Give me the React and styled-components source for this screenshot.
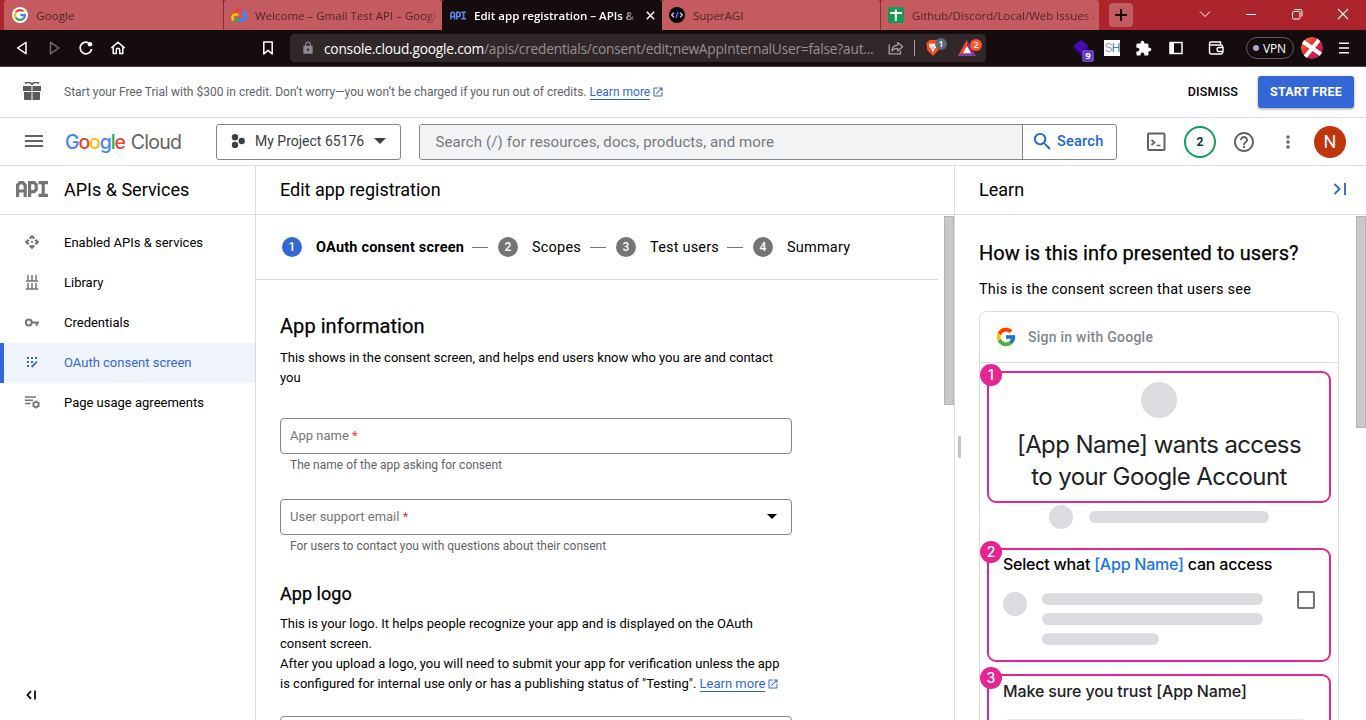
import React from 'react';
import styled, { createGlobalStyle, css } from 'styled-components';
import { FcGoogle } from 'react-icons/fc';
import {
  MdApi, MdHelpOutline, MdMoreVert, MdOpenInNew, MdSearch, MdExtension, MdLock,
} from 'react-icons/md';

const Global = createGlobalStyle`
  * { box-sizing: border-box; }
  html, body { margin: 0; padding: 0; overflow: hidden; background: #fff; }
  body { font-family: Roboto, "Liberation Sans", sans-serif; font-size: 13px; color: #000; }
  svg { display: block; flex: none; }
`;

const uiFont = '"Open Sans", "Noto Sans", sans-serif';
const brandFont = 'Inter, "Open Sans", sans-serif';
const line = '#dadce0';

const Page = styled.div`
  width: 1366px;
  height: 720px;
  display: flex;
  flex-direction: column;
  overflow: hidden;
`;

/* ---------- browser chrome ---------- */
const TabStrip = styled.div`
  height: 30px;
  flex: none;
  display: flex;
  background: #ad252c;
  padding-left: 4px;
  font-family: ${uiFont};
`;
const Tab = styled.div`
  width: ${(p) => p.$w}px;
  flex: none;
  display: flex;
  align-items: center;
  padding-left: ${(p) => p.$pad}px;
  gap: 8px;
  background: ${(p) => (p.$active ? '#150d0d' : '#c45b60')};
  color: ${(p) => (p.$active ? '#fff' : '#552428')};
  border-right: ${(p) => (p.$rule ? '1px solid #7d3238' : '0')};
  border-radius: 3px 3px 0 0;
  font-size: 11.5px;
  font-weight: ${(p) => (p.$active ? 600 : 400)};
`;
const TabTitle = styled.span`
  width: ${(p) => p.$w}px;
  white-space: nowrap;
  letter-spacing: ${(p) => p.$ls || 0}px;
  ${(p) => p.$fade && css`mask-image: linear-gradient(90deg, #000 calc(100% - ${p.$fade}px), transparent);`}
`;
const NewTab = styled.div`
  width: 24px;
  height: 24px;
  margin: 3px 0 0 10px;
  border-radius: 4px;
  background: #c45b60;
  display: grid;
  place-items: center;
`;
const WindowButtons = styled.div`
  margin-left: auto;
  height: 28px;
  display: flex;
  align-items: center;
  gap: 34px;
  padding-right: 17px;
`;
const Toolbar = styled.div`
  height: 37px;
  flex: none;
  display: flex;
  align-items: center;
  background: #150d0d;
  border-bottom: 1px solid #4c4446;
  font-family: ${uiFont};
  color: #fff;
`;
const NavButtons = styled.div`
  display: flex;
  gap: 16px;
  width: 260px;
  padding-left: 14px;
`;
const Address = styled.div`
  width: 696px;
  height: 28px;
  margin-left: 14px;
  border-radius: 4px;
  background: #302729;
  display: flex;
  align-items: center;
  padding-left: 11px;
`;
const Url = styled.span`
  width: 573px;
  flex: none;
  padding-left: 9px;
  font-size: 13.7px;
  white-space: nowrap;
  color: #989193;
  letter-spacing: ${(p) => p.$ls || 0}px;
  b { font-weight: 400; color: #fff; }
`;
const Badged = styled.div`
  position: relative;
  display: flex;
  margin-left: ${(p) => p.$ml || 0}px;
`;
const CountDot = styled.span`
  position: absolute;
  left: ${(p) => p.$x}px;
  top: ${(p) => p.$y}px;
  width: 12px;
  height: 12px;
  border-radius: ${(p) => (p.$square ? 2 : 6)}px;
  background: ${(p) => p.$bg};
  color: #fff;
  font: ${(p) => (p.$square ? 700 : 600)} 9px/12px ${uiFont};
  text-align: center;
`;
const UrlDivider = styled.i`
  width: 1px;
  height: 16px;
  background: #a39c9e;
  margin: 0 10px;
`;
const Extensions = styled.div`
  display: flex;
  align-items: center;
  margin-left: 86px;
`;
const ShTile = styled.span`
  width: 16px;
  height: 16px;
  margin-left: 14px;
  background: #fff;
  color: #8fa3b5;
  font: 12px/16px "Liberation Sans", sans-serif;
  letter-spacing: -0.8px;
  text-align: center;
  b { font-weight: 400; color: #4a83b4; }
`;
const VpnPill = styled.span`
  width: 48px;
  height: 22px;
  margin-left: 22px;
  border: 1px solid #5d5a72;
  border-radius: 11px;
  display: flex;
  align-items: center;
  gap: 4px;
  padding-left: 6px;
  font-size: 12px;
  letter-spacing: -0.2px;
  i { width: 6px; height: 6px; border-radius: 3px; background: #a9a9c8; }
`;

/* ---------- console header ---------- */
const Banner = styled.div`
  height: 51px;
  flex: none;
  display: flex;
  align-items: center;
  border-bottom: 1px solid ${line};
  padding: 0 12px 0 22px;
  color: #5f6368;
`;
const BannerText = styled.span`
  margin-left: 22px;
  font-size: 12px;
  white-space: nowrap;
`;
const Link = styled.span`
  color: #3367d6;
  text-decoration: none;
  border-bottom: 1px solid #3367d6;
`;
const LinkIcon = styled(MdOpenInNew)`
  display: inline-block;
  vertical-align: -2px;
  color: #3367d6;
  margin-left: 2px;
`;
const Dismiss = styled.span`
  margin-left: auto;
  padding-bottom: 1px;
  color: #000;
  font-weight: 500;
  font-size: 12.5px;
  letter-spacing: 0.2px;
`;
const StartFree = styled.div`
  width: 96px;
  height: 32px;
  margin-left: 20px;
  border-radius: 3px;
  background: #3367d6;
  box-shadow: 0 1px 3px rgba(0, 0, 0, 0.4);
  color: #fff;
  font-weight: 700;
  font-size: 12.5px;
  letter-spacing: 0.15px;
  line-height: 31px;
  text-align: center;
`;
const Header = styled.div`
  height: 48px;
  flex: none;
  display: flex;
  align-items: center;
  border-bottom: 1px solid ${line};
  padding-left: 22px;
`;
const Logo = styled.div`
  width: 151px;
  padding-left: 19px;
  font-family: ${brandFont};
  font-size: 19.5px;
  white-space: nowrap;
  color: #5f6368;
`;
const Letters = styled.span`
  font-weight: 500;
  letter-spacing: -1.15px;
`;
const Letter = styled.span`
  color: ${(p) => p.$c};
`;
const CloudWord = styled.span`
  margin-left: 6px;
  letter-spacing: -0.75px;
`;
const ProjectPicker = styled.div`
  width: 185px;
  height: 36px;
  border: 1px solid #80868b;
  border-radius: 3px;
  display: flex;
  align-items: center;
  padding: 0 0 1px 14px;
  color: #3c4043;
  font-size: 14px;
  span { margin: 0 10px 0 10px; white-space: nowrap; }
`;
const SearchBox = styled.div`
  width: 698px;
  height: 36px;
  margin-left: 18px;
  border: 1px solid #80868b;
  border-radius: 3px;
  display: flex;
  overflow: hidden;
`;
const SearchInput = styled.div`
  width: 603px;
  background: #f1f3f4;
  border-right: 1px solid #80868b;
  color: #75797e;
  font-size: 15px;
  line-height: 34px;
  padding-left: 15.5px;
  letter-spacing: 0.1px;
`;
const SearchButton = styled.div`
  flex: 1;
  display: flex;
  align-items: center;
  padding-left: 8px;
  gap: 3px;
  color: #1967d2;
  font-weight: 500;
  font-size: 14.5px;
  line-height: 34px;
  letter-spacing: 0.25px;
`;
const HeaderIcons = styled.div`
  display: flex;
  align-items: center;
  color: #5f6368;
  margin-left: 28px;
`;
const NoteCount = styled.div`
  width: 32px;
  height: 32px;
  margin-left: 17px;
  border: 2px solid #0f9d58;
  border-radius: 50%;
  color: #0d3b22;
  font-weight: 700;
  font-size: 12px;
  line-height: 28px;
  text-align: center;
`;
const Avatar = styled.div`
  width: 32px;
  height: 32px;
  margin-left: 16px;
  border-radius: 50%;
  background: #bf360c;
  color: #fff;
  font-size: 18px;
  line-height: 32px;
  text-align: center;
`;

/* ---------- columns ---------- */
const Columns = styled.div`
  flex: 1;
  min-height: 0;
  display: flex;
`;
const Sidebar = styled.div`
  width: 256px;
  flex: none;
  border-right: 1px solid ${line};
  display: flex;
  flex-direction: column;
`;
const ColumnTitle = styled.div`
  height: 49px;
  flex: none;
  border-bottom: 1px solid ${line};
  display: flex;
  align-items: center;
  justify-content: space-between;
  padding: 0 19px 2px ${(p) => p.$pl}px;
  font-size: 18px;
`;
const ApiTitle = styled.div`
  display: flex;
  align-items: center;
  gap: 16px;
`;
const NavList = styled.div`
  padding-top: 8px;
  flex: 1;
`;
const NavItem = styled.div`
  height: 40px;
  display: flex;
  align-items: center;
  padding: 0 0 2px ${(p) => (p.$active ? 20 : 24)}px;
  gap: 24px;
  border-left: ${(p) => (p.$active ? '4px solid #3367d6' : '0')};
  background: ${(p) => (p.$active ? '#f0f4fd' : 'transparent')};
  color: ${(p) => (p.$active ? '#3367d6' : '#000')};
  svg { color: ${(p) => (p.$active ? '#3367d6' : '#757575')}; }
`;
const Collapse = styled.div`
  padding: 0 0 20px 26px;
`;
const Main = styled.div`
  width: 699px;
  flex: none;
  border-right: 1px solid ${line};
  display: flex;
  flex-direction: column;
`;
const Scroller = styled.div`
  flex: 1;
  min-height: 0;
  display: flex;
  justify-content: space-between;
  overflow: hidden;
`;
const Thumb = styled.i`
  width: 10px;
  height: ${(p) => p.$h}px;
  flex: none;
  margin-top: 1px;
  background: #c9c9c9;
  border: 1px solid #b4b4b4;
`;
const FormArea = styled.div`
  width: 682px;
`;
const Stepper = styled.div`
  height: 65px;
  border-bottom: 1px solid ${line};
  display: flex;
  align-items: center;
  padding-left: 26px;
  font-size: 14.5px;
  letter-spacing: 0.2px;
  white-space: nowrap;
`;
const StepDot = styled.span`
  width: 20px;
  height: 20px;
  border-radius: 50%;
  background: ${(p) => (p.$active ? '#3367d6' : '#757575')};
  color: #fff;
  font-weight: 500;
  font-size: 12px;
  line-height: 20px;
  text-align: center;
  letter-spacing: 0;
`;
const StepName = styled.span`
  width: ${(p) => p.$w}px;
  margin-left: 14px;
  font-weight: ${(p) => (p.$active ? 700 : 400)};
`;
const StepRule = styled.i`
  width: 16px;
  height: 1px;
  background: #757575;
  margin: 0 10px 0 8px;
`;
const Form = styled.div`
  width: 512px;
  margin-left: 24px;
  padding-top: 34px;
`;
const Heading = styled.div`
  margin-top: ${(p) => p.$mt || 0}px;
  font-size: ${(p) => p.$size}px;
  line-height: 24px;
  font-weight: 400;
  letter-spacing: 0.05px;
  -webkit-text-stroke: 0.25px #000;
`;
const Para = styled.div`
  margin-top: ${(p) => p.$mt}px;
  font-size: 13px;
  line-height: 20px;
  white-space: nowrap;
`;
const Field = styled.div`
  height: 36px;
  margin-top: ${(p) => p.$mt}px;
  border: 1px solid #80868b;
  border-radius: 4px;
  display: flex;
  align-items: center;
  justify-content: space-between;
  padding: 0 14px 1px 9px;
  color: #757575;
  em { font-style: normal; color: #e53935; }
`;
const Helper = styled.div`
  margin: 3px 0 0 10px;
  font-size: 12px;
  line-height: 16px;
  color: #5f6368;
`;

/* ---------- learn panel ---------- */
const Learn = styled.div`
  flex: 1;
  display: flex;
  flex-direction: column;
`;
const Grip = styled.i`
  width: 3px;
  height: 22px;
  flex: none;
  margin: 221px 0 0 3px;
  border-radius: 1px;
  background: #c4c4c4;
`;
const LearnBody = styled.div`
  width: 360px;
  padding-top: 26px;
  margin-left: 1px;
`;
const LearnPara = styled.div`
  margin-top: 15px;
  font-size: 14.5px;
  line-height: 20px;
  letter-spacing: 0.22px;
`;
const Card = styled.div`
  margin-top: 11px;
  height: 500px;
  border: 1px solid ${line};
  border-radius: 8px;
`;
const CardHead = styled.div`
  height: 51px;
  border-bottom: 1px solid ${line};
  display: flex;
  align-items: center;
  gap: 11px;
  padding: 0 0 1px 15px;
  color: #80868b;
  font-weight: 500;
  font-size: 14px;
  line-height: 20px;
  letter-spacing: 0.25px;
`;
const Callout = styled.div`
  position: relative;
  width: 344px;
  height: ${(p) => p.$h}px;
  margin: ${(p) => p.$mt}px 0 0 7px;
  border: 2px solid #e52592;
  border-radius: 9px;
`;
const CalloutNo = styled.span`
  position: absolute;
  left: -9px;
  top: -9px;
  width: 22px;
  height: 22px;
  border-radius: 50%;
  background: #e52592;
  color: #fff;
  font: 500 14px/22px ${brandFont};
  text-align: center;
`;
const Blob = styled.i`
  display: block;
  flex: none;
  width: ${(p) => p.$s}px;
  height: ${(p) => p.$s}px;
  margin-top: ${(p) => p.$mt || 0}px;
  border-radius: 50%;
  background: #dadce0;
`;
const Bar = styled.i`
  display: block;
  width: ${(p) => p.$w}px;
  height: 12px;
  border-radius: 6px;
  background: #dadce0;
`;
const Consent = styled.div`
  display: flex;
  flex-direction: column;
  align-items: center;
  padding-top: 9px;
`;
const ConsentText = styled.div`
  margin-top: 11px;
  font-family: ${brandFont};
  font-size: 24px;
  line-height: 32px;
  text-align: center;
  color: #202124;
  white-space: nowrap;
  letter-spacing: -0.6px;
`;
const AccountRow = styled.div`
  display: flex;
  align-items: center;
  gap: 16px;
  margin: 2px 0 0 69px;
`;
const CalloutTitle = styled.div`
  padding: ${(p) => p.$pt}px 0 0 14px;
  font-family: ${brandFont};
  font-size: 16px;
  line-height: 20px;
  font-weight: ${(p) => p.$wt};
  color: ${(p) => p.$c};
  white-space: nowrap;
  letter-spacing: ${(p) => p.$ls}px;
  span { color: #1a73e8; }
`;
const ScopeRow = styled.div`
  display: flex;
  align-items: flex-start;
  padding: 17px 13px 0 14px;
`;
const Bars = styled.div`
  display: flex;
  flex-direction: column;
  gap: 8px;
  margin: 2px 34px 0 15px;
`;
const Box = styled.i`
  width: 18px;
  height: 18px;
  border: 2px solid #70757a;
  border-radius: 2px;
`;
const TrustRule = styled.i`
  display: block;
  height: 1px;
  margin: 18px 26px 0 18px;
  background: #e8eaed;
`;

const Svg = ({ w, h, children, vb }) => (
  <svg width={w} height={h} viewBox={vb || `0 0 ${w} ${h}`} fill="none">{children}</svg>
);

const ApiGlyph = ({ w, h, color }) => (
  <Svg w={w} h={h} vb="0 0 32 16">
    <g stroke={color} strokeWidth="3.2">
      <path d="M1.6 16V4.2L4 1.6h2.8l2.4 2.6V16M1.6 10h7.6" />
      <path d="M13.6 16V1.6h4.6l2 2v5l-2 2h-4.6" />
      <path d="M22.5 1.6h9.5M22.5 14.4h9.5M27.2 1.6v12.8" />
    </g>
  </Svg>
);

const Caret = ({ w, h, color }) => (
  <Svg w={w} h={h} vb="0 0 10 5"><path d="M0 0h10L5 5z" fill={color} /></Svg>
);

function BrowserChrome() {
  return (
    <>
      <TabStrip>
        <Tab $w={220} $pad={8} $rule>
          <Svg w={16} h={16}>
            <circle cx="8" cy="8" r="8" fill="#fff" />
            <g strokeWidth="2.3">
              <path d="M4 5.2A4.9 4.9 0 0 1 11.4 4.4" stroke="#ea4335" />
              <path d="M3.9 5.3a4.9 4.9 0 0 0 0 5.4" stroke="#fbbc05" />
              <path d="M3.9 10.6a4.9 4.9 0 0 0 7.4 1.1" stroke="#34a853" />
              <path d="M11.2 11.8A4.6 4.6 0 0 0 12.9 8.1H8.2" stroke="#4285f4" />
            </g>
          </Svg>
          <TabTitle $w={150} $ls={0.15}>Google</TabTitle>
        </Tab>
        <Tab $w={218} $pad={7}>
          <Svg w={16} h={16}>
            <path d="M3.6 5.8A5 5 0 0 1 11.5 4.3" stroke="#ea4335" strokeWidth="3" />
            <path d="M11 3.9a5 5 0 0 1 2 3 3.2 3.2 0 0 1-.8 6.2H8" stroke="#4285f4" strokeWidth="3" />
            <path d="M8.6 13.1H4.4a3 3 0 0 1-1.8-.6" stroke="#34a853" strokeWidth="3" />
            <path d="M3 13a3 3 0 0 1 1.4-5.6c1.2 0 2 .5 2.5 1.4" stroke="#fbbc05" strokeWidth="2.8" />
          </Svg>
          <TabTitle $w={184} $fade={12}>Welcome – Gmail Test API – Googl</TabTitle>
        </Tab>
        <Tab $w={220} $pad={8} $active>
          <ApiGlyph w={16} h={9} color="#5c85e6" />
          <TabTitle $w={164} $fade={16}>Edit app registration – APIs &amp;</TabTitle>
          <Svg w={9} h={9}><path d="M.8.8l7.4 7.4M8.2.8L.8 8.2" stroke="#fff" strokeWidth="1.5" /></Svg>
        </Tab>
        <Tab $w={219} $pad={7} $rule>
          <Svg w={16} h={16}>
            <circle cx="8" cy="8" r="8" fill="#080508" />
            <path d="M5 5.8L2.6 8 5 10.2M11 5.8L13.4 8 11 10.2" stroke="#d8d4e8" strokeWidth="1.2" />
            <path d="M9 5L7 11" stroke="#6a4df0" strokeWidth="1.6" />
          </Svg>
          <TabTitle $w={150}>SuperAGI</TabTitle>
        </Tab>
        <Tab $w={218} $pad={7}>
          <Svg w={16} h={16}>
            <rect width="16" height="16" rx="1.5" fill="#149a56" />
            <path d="M2 6h12M7.8 2.4V14" stroke="#fff" strokeWidth="2" />
          </Svg>
          <TabTitle $w={184} $fade={12} $ls={-0.03}>Github/Discord/Local/Web Issues i</TabTitle>
        </Tab>
        <NewTab><Svg w={12} h={12}><path d="M0 6h12M6 0v12" stroke="#150d0d" strokeWidth="2" /></Svg></NewTab>
        <WindowButtons>
          <Svg w={12} h={12}><path d="M1 3.5l5 5 5-5" stroke="#fff" /></Svg>
          <Svg w={12} h={12}><path d="M1 6.5h10" stroke="#fff" /></Svg>
          <Svg w={12} h={12}>
            <rect x="1.5" y="3.5" width="7.5" height="7.5" rx="1.2" stroke="#fff" />
            <path d="M3.5 1.5H9a2 2 0 0 1 2 2v5" stroke="#fff" />
          </Svg>
          <Svg w={12} h={12}><path d="M1 1l10 10M11 1L1 11" stroke="#fff" strokeWidth="1.1" /></Svg>
        </WindowButtons>
      </TabStrip>
      <Toolbar>
        <NavButtons>
          <Svg w={16} h={16}><path d="M12 2.3v11.4L3.6 8z" stroke="#fff" strokeWidth="1.5" strokeLinejoin="round" /></Svg>
          <Svg w={16} h={16}><path d="M4.5 2.3v11.4L12.9 8z" stroke="#746d6f" strokeWidth="1.5" strokeLinejoin="round" /></Svg>
          <Svg w={16} h={16}>
            <path d="M10.3 2.7A5.8 5.8 0 1 0 13.6 9" stroke="#fff" strokeWidth="1.7" />
            <circle cx="12" cy="4.2" r="2.3" fill="#fff" />
          </Svg>
          <Svg w={16} h={16}>
            <path d="M1.8 7.6L8 2.2l6.2 5.4M3.2 7v6.6h3.1V10a1.7 1.7 0 0 1 3.4 0v3.6h3.1V7" stroke="#fff" strokeWidth="1.5" strokeLinejoin="round" strokeLinecap="round" />
          </Svg>
        </NavButtons>
        <Svg w={16} h={16}><path d="M3.8 2h8.4v12L8 10.4 3.8 14z" stroke="#fff" strokeWidth="1.5" strokeLinejoin="round" /></Svg>
        <Address>
          <MdLock size={14} color="#8d8a94" />
          <Url $ls={-0.2}><b>console.cloud.google.com</b>/apis/credentials/consent/edit;newAppInternalUser=false?aut...</Url>
          <Svg w={16} h={16}>
            <path d="M1.2 4.5v9.3h11.3v-3" stroke="#aaa4a6" strokeWidth="1.3" />
            <path d="M4 11c.2-3.8 2.3-5.7 5.7-5.9V2.5l5 4.2-5 4.3V8.4C7 8.4 5.2 9.3 4 11z" stroke="#aaa4a6" strokeWidth="1.2" strokeLinejoin="round" />
          </Svg>
          <UrlDivider />
          <Badged>
            <Svg w={16} h={18}>
              <path d="M4.5 1h7l3.2 3-1 7L8 17l-5.7-6-1-7z" fill="#f4511e" />
              <path d="M4 5l2-.6L8 5l2-.6 2 .6-.5 3-1.7 1.5L8 13.5l-1.8-4L4.5 8z" fill="#fff" />
              <path d="M6 6.5l1 1M10 6.5l-1 1M8 8v2" stroke="#f4511e" strokeWidth=".9" />
            </Svg>
            <CountDot $x={10} $y={-1} $bg="#626672">1</CountDot>
          </Badged>
          <Badged $ml={17}>
            <Svg w={18} h={16}>
              <path d="M9 0L0 16h18z" fill="#a02a7a" />
              <path d="M9 0L0 16l9-5z" fill="#ff4724" />
              <path d="M0 16h18l-5-3.5H5z" fill="#8b3ea8" />
              <path d="M9 6l-4.2 7.3h8.4z" fill="#fff" />
            </Svg>
            <CountDot $x={12} $y={-1} $bg="#fb542b">2</CountDot>
          </Badged>
        </Address>
        <Extensions>
          <Badged>
            <Svg w={18} h={16}>
              <path d="M1 9l8-6 8 6-8 7z" fill="#29077d" />
              <path d="M1 6.2L9 0l8 6.2L9 12.5z" fill="#4a0bb5" />
            </Svg>
            <CountDot $x={10} $y={10} $bg="#6b3fc4" $square>9</CountDot>
          </Badged>
          <ShTile>S<b>H</b></ShTile>
          <Badged $ml={15}><MdExtension size={17} color="#fff" /></Badged>
          <Badged $ml={17}>
            <Svg w={14} h={14}>
              <rect x="1" y="1.5" width="12" height="11" stroke="#fff" strokeWidth="1.5" />
              <path d="M1 1.5h4v11H1z" fill="#fff" />
            </Svg>
          </Badged>
          <Badged $ml={25}>
            <Svg w={16} h={16}>
              <path d="M1.5 5V3.5a1.5 1.5 0 0 1 1.5-1.5h9.5v3M1.5 4.8V12a2 2 0 0 0 2 2h9.5a1.5 1.5 0 0 0 1.5-1.5V6.5A1.5 1.5 0 0 0 13 5H1.5" stroke="#fff" strokeWidth="1.4" />
              <path d="M15 7.5h-4a2 2 0 0 0 0 4h4z" fill="#150d0d" stroke="#fff" strokeWidth="1.3" />
            </Svg>
          </Badged>
          <VpnPill><i />VPN</VpnPill>
          <Badged $ml={7}>
            <Svg w={22} h={22}>
              <defs>
                <linearGradient id="av" x1="0" x2="1" y1="0" y2="1">
                  <stop offset="0" stopColor="#f9862f" /><stop offset=".5" stopColor="#e0263c" /><stop offset="1" stopColor="#a2107c" />
                </linearGradient>
                <clipPath id="avc"><circle cx="11" cy="11" r="11" /></clipPath>
              </defs>
              <g clipPath="url(#avc)">
                <circle cx="11" cy="11" r="11" fill="url(#av)" />
                <path d="M1 4l20 14M18 3L4 20" stroke="#fff" strokeWidth="4" />
              </g>
            </Svg>
          </Badged>
          <Badged $ml={16}>
            <Svg w={10} h={12}><path d="M0 1.2h10M0 6h10M0 10.8h10" stroke="#fff" strokeWidth="1.6" /></Svg>
          </Badged>
        </Extensions>
      </Toolbar>
    </>
  );
}

function ConsoleHeader() {
  return (
    <>
      <Banner>
        <Svg w={20} h={20}>
          <path d="M1 4h8.5v5H1zM10.5 4H19v5h-8.5zM2 10h7.5v8H2.8a.8.8 0 0 1-.8-.8zM10.5 10H18v7.2a.8.8 0 0 1-.8.8h-6.7z" fill="#5a5c5f" />
          <path d="M3 1.5C5 -.2 8.500.2 10 2.200 11.500.2 15-.2 17 1.500" stroke="#5a5c5f" strokeWidth="1.8" />
        </Svg>
        <BannerText>
          Start your Free Trial with $300 in credit. Don’t worry—you won’t be charged if you run out of credits. <Link>Learn more</Link>
          <LinkIcon size={12} />
        </BannerText>
        <Dismiss>DISMISS</Dismiss>
        <StartFree>START FREE</StartFree>
      </Banner>
      <Header>
        <Svg w={24} h={14}><path d="M3 1h18M3 6h18M3 11h18" stroke="#5f6368" strokeWidth="2" /></Svg>
        <Logo>
          <Letters>
            <Letter $c="#4285f4">G</Letter><Letter $c="#ea4335">o</Letter><Letter $c="#fbbc04">o</Letter>
            <Letter $c="#4285f4">g</Letter><Letter $c="#34a853">l</Letter><Letter $c="#ea4335">e</Letter>
          </Letters>
          <CloudWord>Cloud</CloudWord>
        </Logo>
        <Badged $ml={19}>
          <ProjectPicker>
            <Svg w={14} h={14}>
              <circle cx="4" cy="3.2" r="3.2" fill="#3c4043" />
              <circle cx="10.7" cy="7" r="3.2" fill="#3c4043" />
              <circle cx="4" cy="11" r="3.2" fill="#3c4043" />
            </Svg>
            <span>My Project 65176</span>
            <Caret w={12} h={6} color="#3c4043" />
          </ProjectPicker>
        </Badged>
        <SearchBox>
          <SearchInput>Search (/) for resources, docs, products, and more</SearchInput>
          <SearchButton><MdSearch size={23} />Search</SearchButton>
        </SearchBox>
        <HeaderIcons>
          <Svg w={22} h={22}>
            <rect x="3" y="2.5" width="16.5" height="16.5" rx="1" stroke="#5f6368" strokeWidth="2" />
            <path d="M6.5 9l3 2.5-3 2.5M11.5 14.5h4" stroke="#5f6368" strokeWidth="1.7" />
          </Svg>
          <NoteCount>2</NoteCount>
          <Badged $ml={16}><MdHelpOutline size={24} /></Badged>
          <Badged $ml={22}><MdMoreVert size={20} /></Badged>
          <Avatar>N</Avatar>
        </HeaderIcons>
      </Header>
    </>
  );
}

const LibraryIcon = () => (
  <Svg w={16} h={16}>
    <path d="M2 7h12M2 15h12M4 1v6M8 1v6M12 1v6M4 9v6M8 9v6M12 9v6" stroke="#757575" strokeWidth="1.5" />
  </Svg>
);
const KeyIcon = () => (
  <Svg w={16} h={16}>
    <circle cx="4.8" cy="8.5" r="2.9" stroke="#757575" strokeWidth="2" />
    <path d="M7.8 8.500H15M12.600 8.500v3.300" stroke="#757575" strokeWidth="2.100" />
  </Svg>
);
const ConsentIcon = () => (
  <Svg w={16} h={16}>
    <path d="M3 3h2v2H3zM7 3h2v2H7zM11 3h2v2h-2zM3 7h2v2H3zM7 7h2v2H7zM3 11h2v2H3z" fill="#3367d6" />
    <path d="M7.600 13l5.400-5.400" stroke="#3367d6" strokeWidth="1.800" />
  </Svg>
);
const AgreementIcon = () => (
  <Svg w={16} h={16}>
    <path d="M1 3h11M1 6.2h8M1 9.4h5.5" stroke="#757575" strokeWidth="1.5" />
    <circle cx="12" cy="10.5" r="2.6" stroke="#757575" strokeWidth="1.8" />
    <path d="M12 6.5v1.2M12 13.3v1.2M8.5 8.5l1.1.6M14.4 11.9l1.1.6M8.5 12.5l1.1-.6M14.4 9.1l1.1-.6" stroke="#757575" strokeWidth="1.4" />
  </Svg>
);

const navItems = [
  ['Enabled APIs & services', <MdApi size={16} />],
  ['Library', <LibraryIcon />],
  ['Credentials', <KeyIcon />],
  ['OAuth consent screen', <ConsentIcon />],
  ['Page usage agreements', <AgreementIcon />],
];

function Steps() {
  return (
    <Stepper>
      <StepDot $active>1</StepDot><StepName $w={148} $active>OAuth consent screen</StepName><StepRule />
      <StepDot>2</StepDot><StepName $w={50}>Scopes</StepName><StepRule />
      <StepDot>3</StepDot><StepName $w={69}>Test users</StepName><StepRule />
      <StepDot>4</StepDot><StepName $w={70}>Summary</StepName>
    </Stepper>
  );
}

export default function App() {
  return (
    <Page>
      <Global />
      <BrowserChrome />
      <ConsoleHeader />
      <Columns>
        <Sidebar>
          <ColumnTitle $pl={16}>
            <ApiTitle><ApiGlyph w={32} h={16} color="#757575" /><span>APIs &amp; Services</span></ApiTitle>
          </ColumnTitle>
          <NavList>
            {navItems.map(([label, icon], i) => (
              <NavItem key={label} $active={i === 3}>{icon}{label}</NavItem>
            ))}
          </NavList>
          <Collapse>
            <Svg w={12} h={10}><path d="M5 1.2L1.4 5 5 8.8M9 .5v9" stroke="#000" strokeWidth="1.7" /></Svg>
          </Collapse>
        </Sidebar>
        <Main>
          <ColumnTitle $pl={24}>Edit app registration</ColumnTitle>
          <Scroller>
            <FormArea>
              <Steps />
              <Form>
                <Heading $size={20}>App information</Heading>
                <Para $mt={10}>This shows in the consent screen, and helps end users know who you are and contact<br />you</Para>
                <Field $mt={30}><span>App name <em>*</em></span></Field>
                <Helper>The name of the app asking for consent</Helper>
                <Field $mt={26}><span>User support email <em>*</em></span><Caret w={10} h={5} color="#000" /></Field>
                <Helper>For users to contact you with questions about their consent</Helper>
                <Heading $size={18} $mt={28}>App logo</Heading>
                <Para $mt={8}>
                  This is your logo. It helps people recognize your app and is displayed on the OAuth<br />
                  consent screen.<br />
                  After you upload a logo, you will need to submit your app for verification unless the app<br />
                  is configured for internal use only or has a publishing status of "Testing". <Link>Learn more</Link>
                  <LinkIcon size={12} />
                </Para>
                <Field $mt={22} />
              </Form>
            </FormArea>
            <Thumb $h={189} />
          </Scroller>
        </Main>
        <Learn>
          <ColumnTitle $pl={24}>
            <span>Learn</span>
            <Svg w={14} h={14}><path d="M1.5 2l5 5-5 5M12 1v12" stroke="#3367d6" strokeWidth="1.9" /></Svg>
          </ColumnTitle>
          <Scroller>
            <Grip />
            <LearnBody>
              <Heading $size={20}>How is this info presented to users?</Heading>
              <LearnPara>This is the consent screen that users see</LearnPara>
              <Card>
                <CardHead><FcGoogle size={22} />Sign in with Google</CardHead>
                <Callout $h={132} $mt={8}>
                  <CalloutNo>1</CalloutNo>
                  <Consent>
                    <Blob $s={36} />
                    <ConsentText>[App Name] wants access<br />to your Google Account</ConsentText>
                  </Consent>
                </Callout>
                <AccountRow><Blob $s={24} /><Bar $w={180} /></AccountRow>
                <Callout $h={114} $mt={19}>
                  <CalloutNo>2</CalloutNo>
                  <CalloutTitle $pt={4} $wt={500} $c="#000" $ls={-0.22}>Select what <span>[App Name]</span> can access</CalloutTitle>
                  <ScopeRow>
                    <Blob $s={24} $mt={1} />
                    <Bars><Bar $w={221} /><Bar $w={221} /><Bar $w={117} /></Bars>
                    <Box />
                  </ScopeRow>
                </Callout>
                <Callout $h={140} $mt={12}>
                  <CalloutNo>3</CalloutNo>
                  <CalloutTitle $pt={5} $wt={450} $c="#202124" $ls={-0.13}>Make sure you trust [App Name]</CalloutTitle>
                  <TrustRule />
                </Callout>
              </Card>
            </LearnBody>
            <Thumb $h={212} />
          </Scroller>
        </Learn>
      </Columns>
    </Page>
  );
}
